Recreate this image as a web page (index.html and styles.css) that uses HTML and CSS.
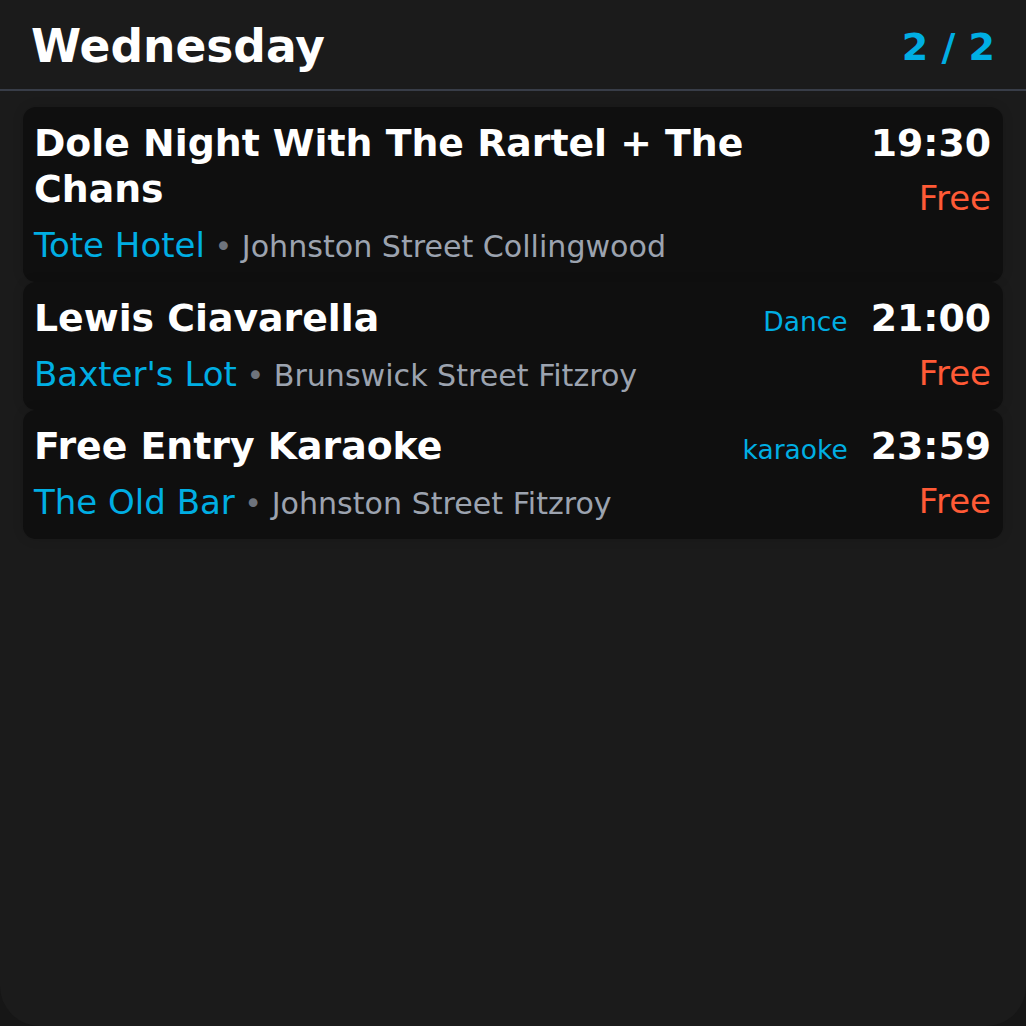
FILE: index.html
```html
<!DOCTYPE html>
<html lang="en">
<head>
<meta charset="utf-8">
<title>Wednesday</title>
<link rel="stylesheet" href="styles.css">
</head>
<body>
<div class="app">
  <header class="header">
    <h1 class="day">Wednesday</h1>
    <div class="pager">2 / 2</div>
  </header>
  <main class="list">
    <article class="card">
      <div class="main">
        <div class="title">Dole Night With The Rartel + The Chans</div>
        <div class="venue-row"><span class="venue">Tote Hotel</span><span class="addr"> <span class="dot">•</span> Johnston Street Collingwood</span></div>
      </div>
      <div class="side">
        <div class="time">19:30</div>
        <div class="price">Free</div>
      </div>
    </article>
    <article class="card">
      <div class="main">
        <div class="title">Lewis Ciavarella</div>
        <div class="venue-row"><span class="venue">Baxter's Lot</span><span class="addr"> <span class="dot">•</span> Brunswick Street Fitzroy</span></div>
      </div>
      <div class="tag">Dance</div>
      <div class="side">
        <div class="time">21:00</div>
        <div class="price">Free</div>
      </div>
    </article>
    <article class="card">
      <div class="main">
        <div class="title">Free Entry Karaoke</div>
        <div class="venue-row"><span class="venue">The Old Bar</span><span class="addr"> <span class="dot">•</span> Johnston Street Fitzroy</span></div>
      </div>
      <div class="tag">karaoke</div>
      <div class="side">
        <div class="time">23:59</div>
        <div class="price">Free</div>
      </div>
    </article>
  </main>
</div>
</body>
</html>
```
FILE: styles.css
```css
html {
  background: #161616;
}
body {
  margin: 0;
  font-family: "DejaVu Sans", Verdana, sans-serif;
  color: #ffffff;
}
.app {
  min-height: 1026px;
  box-sizing: border-box;
  background: #1b1b1b;
  border-radius: 0 0 40px 40px;
}
.header {
  display: flex;
  justify-content: space-between;
  align-items: center;
  height: 85px;
  padding: 4px 31px 0 31px;
  border-bottom: 2px solid #383d48;
}
.day {
  margin: 0;
  font-size: 45.5px;
  line-height: 54px;
  font-weight: bold;
  color: #ffffff;
}
.pager {
  font-size: 38px;
  line-height: 44px;
  font-weight: bold;
  color: #00aee3;
}
.list {
  display: flex;
  flex-direction: column;
  padding: 16px 23px;
}
.card {
  display: flex;
  align-items: baseline;
  background: #0f0f0f;
  border-radius: 13px;
  padding: 13px 12px 12.5px 11px;
  box-shadow: 0 0 12px rgba(0, 0, 0, 0.12);
}
.main {
  flex: 1;
  min-width: 0;
  padding-right: 100px;
}
.title {
  font-size: 37.8px;
  line-height: 46px;
  font-weight: bold;
}
.venue-row {
  margin-top: 9px;
  font-size: 34px;
  line-height: 48px;
  white-space: nowrap;
}
.venue {
  color: #00aee3;
}
.addr {
  font-size: 30.1px;
  line-height: 1;
  color: #9ca3af;
}
.dot {
  color: #6e737c;
}
.tag {
  font-size: 26.5px;
  color: #00aee3;
  margin-right: 23px;
}
.side {
  display: flex;
  flex-direction: column;
  align-items: flex-end;
}
.time {
  font-size: 37.8px;
  line-height: 46px;
  font-weight: bold;
}
.price {
  margin-top: 8px;
  font-size: 34px;
  line-height: 48px;
  color: #ff5a36;
}
```
